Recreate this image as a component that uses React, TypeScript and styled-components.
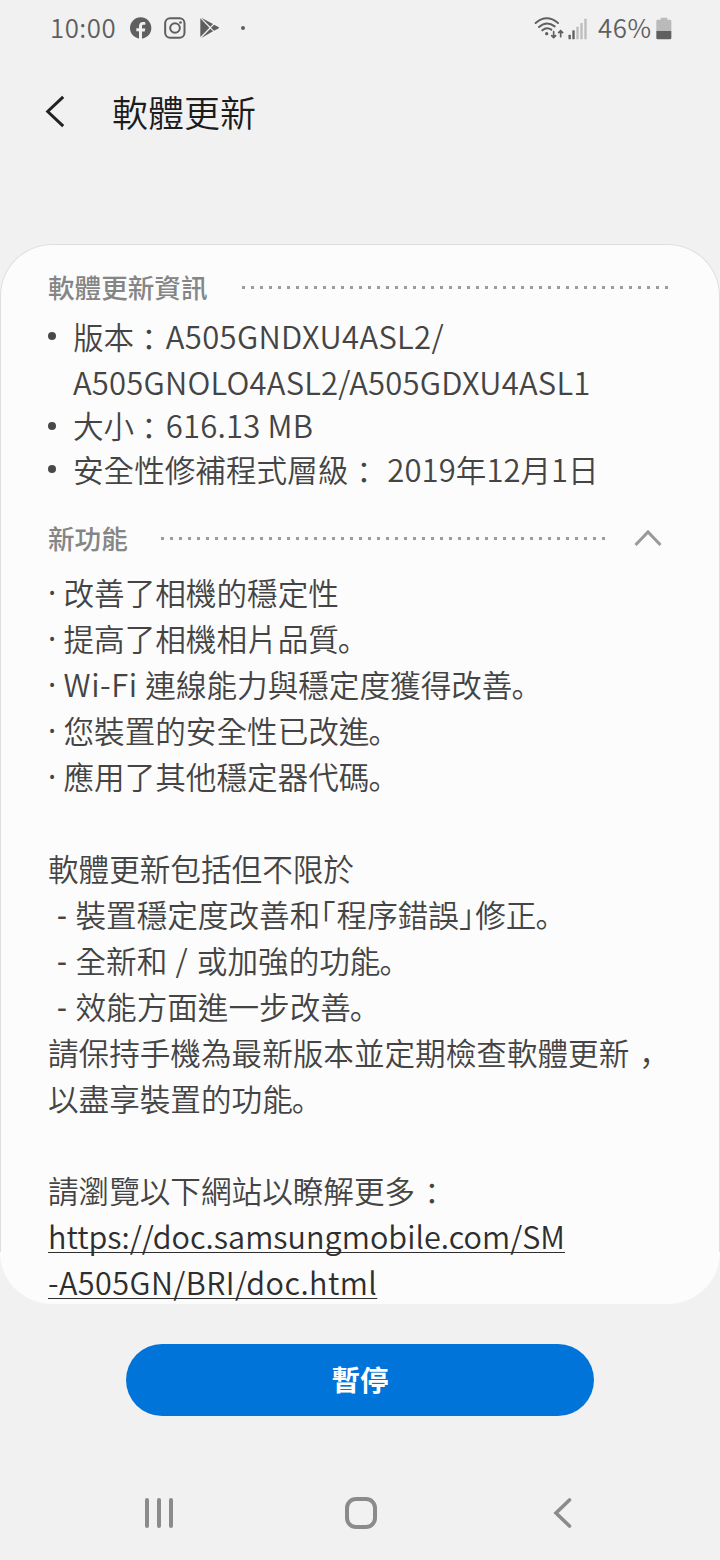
import React from 'react';
import styled, { createGlobalStyle } from 'styled-components';

const Global = createGlobalStyle`
  * { box-sizing: border-box; }
  html, body { margin: 0; padding: 0; background: #f1f1f1; }
  body {
    font-family: "Noto Sans CJK TC", "Noto Sans", sans-serif;
    text-spacing-trim: space-all;
  }
`;

const Screen = styled.div`
  width: 720px;
  height: 1560px;
  display: flex;
  flex-direction: column;
  background: #f1f1f1;
  overflow: hidden;
`;

const StatusBar = styled.header`
  height: 56px;
  flex: none;
  display: flex;
  align-items: center;
  justify-content: space-between;
  padding: 0 48px 0 50px;
  color: #5f5f5f;
`;

const StatusGroup = styled.div`
  display: flex;
  align-items: center;
  height: 56px;
`;

const StatusText = styled.span<{ $track?: number; $width: number }>`
  width: ${(p) => p.$width}px;
  padding-bottom: 2px;
  font-size: 25.8px;
  font-weight: 350;
  line-height: 54px;
  white-space: nowrap;
  letter-spacing: ${(p) => p.$track ?? 0}px;
`;

const TitleBar = styled.div`
  height: 110px;
  flex: none;
  display: flex;
  align-items: center;
  padding-left: 44px;
  margin-bottom: 78px;
`;

const BackButton = styled.button`
  border: 0;
  padding: 0;
  background: none;
  display: flex;
  width: 68px;
`;

const Title = styled.h1`
  margin: 0;
  padding-bottom: 1px;
  font-size: 36px;
  line-height: 56px;
  font-weight: 350;
  color: #1c1c1c;
`;

const Card = styled.main`
  position: relative;
  height: 1060px;
  flex: none;
  padding: 22px 0 0 48px;
  background: #fcfcfc;
  border-radius: 52px;
  color: #444;

  &::before {
    content: "";
    position: absolute;
    inset: 0 0 52px;
    border: 1px solid #dedede;
    border-bottom: 0;
    border-radius: 52px 52px 0 0;
    pointer-events: none;
  }
`;

const SectionHead = styled.div<{ $gap: number }>`
  display: flex;
  align-items: center;
  height: 42px;
  gap: ${(p) => p.$gap}px;
`;

const SectionTitle = styled.h2`
  margin: 0;
  font-size: 26.6px;
  line-height: 42px;
  font-weight: 500;
  color: #858585;
`;

const Dots = styled.div<{ $width: number }>`
  width: ${(p) => p.$width}px;
  height: 3px;
  background: repeating-linear-gradient(90deg, #9c9c9c 0 3px, transparent 3px 9px);
`;

const Caret = styled.div`
  display: flex;
  margin-left: -6px;
`;

const InfoList = styled.ul`
  list-style: none;
  margin: 6px 0 26px;
  padding: 0;
`;

const InfoItem = styled.li<{ $height: number; $line: number }>`
  display: flex;
  height: ${(p) => p.$height}px;
  font-size: 30.6px;
  font-weight: 350;
  line-height: ${(p) => p.$line}px;
  white-space: nowrap;
`;

const InfoText = styled.div`
  margin-top: -1px;
`;

const Bullet = styled.span`
  width: 8px;
  height: 8px;
  margin: 18px 17px 0 0;
  border-radius: 50%;
  background: #484848;
  flex: none;
`;

const Notes = styled.div`
  margin-top: 10px;
  font-size: 30.6px;
  font-weight: 350;
  line-height: 46px;
  white-space: pre;
`;

const Line = styled.div<{ $indent?: number }>`
  height: 46px;
  padding-left: ${(p) => p.$indent ?? 0}px;
  display: flex;
`;

const Marker = styled.span<{ $width: number }>`
  width: ${(p) => p.$width}px;
  flex: none;
  font-family: "Noto Sans", sans-serif;
  font-weight: 400;
`;

const Latin = styled.span<{ $track?: number }>`
  font-size: 31px;
  letter-spacing: ${(p) => p.$track ?? 0}px;
`;

const PunctText = styled.span<{ $before: number; $after: number }>`
  font-family: "Noto Sans CJK SC", sans-serif;
  margin-left: ${(p) => p.$before}px;
  margin-right: ${(p) => p.$after}px;
`;

const Punct = ({ before = 0, after = 0, children }: { before?: number; after?: number; children: React.ReactNode }) => (
  <PunctText lang="zh-CN" $before={before} $after={after}>{children}</PunctText>
);

const HalfWidth = styled.span`
  font-feature-settings: "halt";
  letter-spacing: 1px;
`;

const DocLink = styled.a<{ $track: number }>`
  color: #2e2e2e;
  letter-spacing: ${(p) => p.$track}px;
  text-decoration: underline;
  text-decoration-thickness: 1px;
  text-underline-offset: 3px;
  text-decoration-skip-ink: none;
`;

const PauseButton = styled.button`
  width: 468px;
  height: 72px;
  flex: none;
  margin: 40px auto 0;
  border: 0;
  padding: 0 0 2px;
  border-radius: 36px;
  background: #0074d8;
  color: #fff;
  font-family: inherit;
  font-size: 28.6px;
  line-height: 70px;
  font-weight: 700;
`;

const NavBar = styled.nav`
  height: 94px;
  margin-top: 50px;
  flex: none;
  display: flex;
  align-items: center;
  justify-content: space-between;
  padding: 0 147px 0 143px;
`;

const HomeKey = styled.div`
  display: flex;
  margin-right: 6px;
`;

const Facebook = () => (
  <svg width="22" height="22" viewBox="0 0 66 66">
    <circle cx="32" cy="33" r="32" fill="#5f5f5f" />
    <path d="M27 66V43h-8v-9h8v-6c0-9 5-13 12-13 3 0 6 .3 7 .6v8h-5c-4 0-5 2-5 5v6h10l-2 9h-8v23z" fill="#f1f1f1" />
  </svg>
);

const Instagram = () => (
  <svg width="22" height="22" viewBox="0 0 66 66" fill="none" stroke="#5f5f5f" strokeWidth="6">
    <rect x="3.500" y="3.500" width="58" height="59" rx="15" />
    <circle cx="33" cy="33" r="14.5" />
    <circle cx="49.500" cy="16.500" r="4" fill="#5f5f5f" stroke="none" />
  </svg>
);

const PlayStore = () => (
  <svg width="20" height="22" viewBox="0 0 60 66" fill="#5f5f5f">
    <path d="M1 4v56l27-28z" />
    <path d="M4 2l27 27 8-8z" />
    <path d="M4 63l27-28 8 8z" />
    <path d="M42 23l-9 9 9 9 12-6q6-3 0-6z" />
  </svg>
);

const Wifi = () => (
  <svg width="31" height="24" viewBox="42 45 93 72" fill="none" stroke="#5f5f5f" strokeWidth="6" strokeLinecap="round">
    <path d="M47 66Q80 38 114 66" />
    <path d="M57 78Q80 58 104 76" />
    <path d="M67 88Q80 77 94 86" />
    <circle cx="80" cy="98" r="5" fill="#5f5f5f" stroke="none" />
    <path d="M101 92v17M95 104l6 6 6-6M122 107V89M116 95l6-6 6 6" strokeWidth="5" />
  </svg>
);

const Signal = () => (
  <svg width="20" height="24" viewBox="146 45 60 72">
    <g fill="#5f5f5f">
      <rect x="147.500" y="101" width="7" height="14" rx="2" />
      <rect x="159" y="88" width="7" height="27" rx="2" />
    </g>
    <g fill="#bdbdbd">
      <rect x="171" y="77" width="7" height="38" rx="2" />
      <rect x="183" y="66" width="7" height="49" rx="2" />
      <rect x="195" y="53" width="7" height="62" rx="2" />
    </g>
  </svg>
);

const Battery = () => (
  <svg width="16" height="24" viewBox="409 45 48 72">
    <path d="M423 50h20v6h8q4 0 4 4v30h-45V60q0-4 4-4h9z" fill="#bababa" />
    <path d="M410 90h45v21q0 4-4 4h-37q-4 0-4-4z" fill="#5f5f5f" />
  </svg>
);

const Spacer = styled.span<{ $w: number }>`
  width: ${(p) => p.$w}px;
  flex: none;
`;

const NotificationDot = styled.span`
  width: 4px;
  height: 4px;
  border-radius: 50%;
  background: #5f5f5f;
`;

export default function App() {
  return (
    <Screen lang="zh-TW">
      <Global />
      <StatusBar>
        <StatusGroup>
          <StatusText $width={80} $track={0.5}>10:00</StatusText>
          <Facebook />
          <Spacer $w={12} />
          <Instagram />
          <Spacer $w={14} />
          <PlayStore />
          <Spacer $w={21} />
          <NotificationDot />
        </StatusGroup>
        <StatusGroup>
          <Wifi />
          <Spacer $w={3} />
          <Signal />
          <Spacer $w={10} />
          <StatusText $width={58} $track={0.6}>46%</StatusText>
          <Battery />
        </StatusGroup>
      </StatusBar>

      <TitleBar>
        <BackButton aria-label="返回">
          <svg width="22" height="34" viewBox="44 94 22 34" fill="none" stroke="#222" strokeWidth="3">
            <path d="M63.200 96.800L47.700 111.500L63.200 126.200" />
          </svg>
        </BackButton>
        <Title>軟體更新</Title>
      </TitleBar>

      <Card>
        <SectionHead $gap={34}>
          <SectionTitle>軟體更新資訊</SectionTitle>
          <Dots $width={427} />
        </SectionHead>
        <InfoList>
          <InfoItem $height={90} $line={46}>
            <Bullet />
            <InfoText>
              版本<Punct before={7} after={-6}>：</Punct><Latin $track={0.35}>A505GNDXU4ASL2/</Latin>
              <br />
              <Latin $track={0.21}>A505GNOLO4ASL2/A505GDXU4ASL1</Latin>
            </InfoText>
          </InfoItem>
          <InfoItem $height={43} $line={44}>
            <Bullet />
            <InfoText>大小<Punct before={7} after={-6}>：</Punct><Latin $track={0.2}>616.13 MB</Latin></InfoText>
          </InfoItem>
          <InfoItem $height={44} $line={45}>
            <Bullet />
            <InfoText>安全性修補程式層級<Punct before={8} after={-8}>：</Punct><Latin $track={1.5}> </Latin><Latin $track={0.1}>2019</Latin>年<Latin>12</Latin>月<Latin>1</Latin>日</InfoText>
          </InfoItem>
        </InfoList>

        <SectionHead $gap={33}>
          <SectionTitle>新功能</SectionTitle>
          <Dots $width={445} />
          <Caret>
            <svg width="30" height="20" viewBox="633 529 30 20" fill="none" stroke="#999" strokeWidth="3">
              <path d="M635.500 546L648 533L660.500 546" />
            </svg>
          </Caret>
        </SectionHead>
        <Notes>
          <Line><Marker $width={15.5}>·</Marker>改善了相機的穩定性</Line>
          <Line><Marker $width={15.5}>·</Marker>提高了相機相片品質<Punct before={-1}>。</Punct></Line>
          <Line><Marker $width={15.5}>·</Marker><Latin $track={0.6}>Wi-Fi </Latin>連線能力與穩定度獲得改善<Punct before={-1}>。</Punct></Line>
          <Line><Marker $width={15.5}>·</Marker>您裝置的安全性已改進<Punct before={-1}>。</Punct></Line>
          <Line><Marker $width={15.5}>·</Marker>應用了其他穩定器代碼<Punct before={-1}>。</Punct></Line>
          <Line />
          <Line>軟體更新包括但不限於</Line>
          <Line $indent={9}><Marker $width={18.5}>-</Marker>裝置穩定度改善和<HalfWidth>「</HalfWidth>程序錯誤<HalfWidth>」</HalfWidth>修正<Punct before={-1}>。</Punct></Line>
          <Line $indent={9}><Marker $width={18.5}>-</Marker>全新和<Latin $track={1.2}> / </Latin>或加強的功能<Punct before={-1}>。</Punct></Line>
          <Line $indent={9}><Marker $width={18.5}>-</Marker>效能方面進一步改善<Punct before={-1}>。</Punct></Line>
          <Line>請保持手機為最新版本並定期檢查軟體更新<Punct before={10}>，</Punct></Line>
          <Line>以盡享裝置的功能<Punct before={-1}>。</Punct></Line>
          <Line />
          <Line>請瀏覽以下網站以瞭解更多<Punct before={9}>：</Punct></Line>
          <Line><DocLink $track={0.04}>https://doc.samsungmobile.com/SM</DocLink></Line>
          <Line><DocLink $track={0.45}>-A505GN/BRI/doc.html</DocLink></Line>
        </Notes>
      </Card>

      <PauseButton>暫停</PauseButton>

      <NavBar>
        <svg width="32" height="34" viewBox="0 0 32 34" stroke="#8b8b8b" strokeWidth="4" strokeLinecap="round">
          <path d="M4 4v26M16 4v26M28 4v26" />
        </svg>
        <HomeKey>
          <svg width="34" height="34" viewBox="0 0 34 34" fill="none" stroke="#8b8b8b" strokeWidth="4">
            <rect x="3" y="3" width="28" height="28" rx="9" />
          </svg>
        </HomeKey>
        <svg width="20" height="34" viewBox="0 0 20 34" fill="none" stroke="#8b8b8b" strokeWidth="3.600" strokeLinecap="round">
          <path d="M16.500 4L3 17L16.500 30" />
        </svg>
      </NavBar>
    </Screen>
  );
}
